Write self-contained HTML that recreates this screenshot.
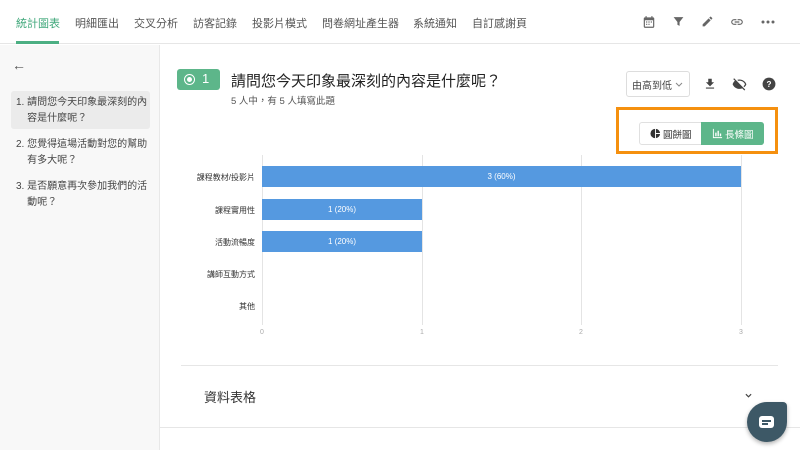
<!DOCTYPE html>
<html><head><meta charset="utf-8"><style>
*{margin:0;padding:0;box-sizing:border-box}
body{width:800px;height:450px;overflow:hidden;background:#fff;font-family:"Liberation Sans","Noto Sans CJK TC",sans-serif;color:#333;position:relative;white-space:nowrap}
.abs{position:absolute}
.nav{left:0;top:0;width:800px;height:44px;border-bottom:1px solid #e6e6e6;background:#fff}
.nav span{position:absolute;top:15px;font-size:11px;color:#555}
.side{left:0;top:45px;width:160px;height:405px;background:#f8f8f8;border-right:1px solid #e8e8e8}
.q{position:absolute;left:11px;width:139px;font-size:10px;line-height:16px;color:#444;padding:4px 5px}
.lab{position:absolute;right:545px;font-size:8px;color:#333;text-align:right}
.bar{position:absolute;left:262px;height:21px;background:#5599e0;color:#fff;font-size:8px;text-align:center;line-height:21px}
.grid{position:absolute;top:155px;width:1px;height:170px;background:#e4e4e4}
.tick{position:absolute;top:329px;font-size:7px;color:#aaa}
</style></head><body>
<div class="abs nav">
<span style="left:16px;color:#3fa77a">統計圖表</span>
<div class="abs" style="left:16px;top:41px;width:43px;height:3px;background:#4caf83"></div>
<span style="left:75px">明細匯出</span>
<span style="left:134px">交叉分析</span>
<span style="left:193px">訪客記錄</span>
<span style="left:252px">投影片模式</span>
<span style="left:322px">問卷網址產生器</span>
<span style="left:413px">系統通知</span>
<span style="left:472px">自訂感謝頁</span>
<svg class="abs" style="left:642px;top:15px" width="14" height="14" viewBox="0 0 24 24"><path fill="#666" d="M19 4h-1V2h-2v2H8V2H6v2H5a2 2 0 0 0-2 2v14a2 2 0 0 0 2 2h14a2 2 0 0 0 2-2V6a2 2 0 0 0-2-2zm0 16H5V9h14z"/><path fill="#666" d="M7 11h2v2H7zm4 0h2v2h-2zm4 0h2v2h-2zm-8 4h2v2H7zm4 0h2v2h-2z"/></svg>
<svg class="abs" style="left:672px;top:15px" width="13" height="13" viewBox="0 0 24 24"><path fill="#666" d="M3 4h18l-7 9v7l-4-2v-5z"/></svg>
<svg class="abs" style="left:701px;top:15px" width="13" height="13" viewBox="0 0 24 24"><path fill="#666" d="M3 17.2V21h3.8L17.8 9.9l-3.7-3.7zM20.7 7c.4-.4.4-1 0-1.4l-2.3-2.3c-.4-.4-1-.4-1.4 0l-1.8 1.8 3.7 3.7z"/></svg>
<svg class="abs" style="left:730px;top:15px" width="14" height="14" viewBox="0 0 24 24"><path fill="#666" d="M3.9 12c0-1.7 1.4-3.1 3.1-3.1h4V7H7a5 5 0 0 0 0 10h4v-1.9H7c-1.7 0-3.1-1.4-3.1-3.1zM8 13h8v-2H8zm9-6h-4v1.9h4c1.7 0 3.1 1.4 3.1 3.1s-1.4 3.1-3.1 3.1h-4V17h4a5 5 0 0 0 0-10z"/></svg>
<svg class="abs" style="left:761px;top:20px" width="14" height="4" viewBox="0 0 14 4"><circle cx="2" cy="2" r="1.5" fill="#666"/><circle cx="7" cy="2" r="1.5" fill="#666"/><circle cx="12" cy="2" r="1.5" fill="#666"/></svg>
</div>
<div class="abs side">
<div class="abs" style="left:12px;top:12px;font-size:14px;color:#555">←</div>
<div class="q" style="top:46px;background:#ebebeb;border-radius:3px;height:38px">1. 請問您今天印象最深刻的內<br>&nbsp;&nbsp;&nbsp;&nbsp;容是什麼呢？</div>
<div class="q" style="top:88px">2. 您覺得這場活動對您的幫助<br>&nbsp;&nbsp;&nbsp;&nbsp;有多大呢？</div>
<div class="q" style="top:130px">3. 是否願意再次參加我們的活<br>&nbsp;&nbsp;&nbsp;&nbsp;動呢？</div>
</div>
<div class="abs" style="left:177px;top:69px;width:43px;height:21px;background:#5db68a;border-radius:3px;color:#fff;font-size:13px">
<div class="abs" style="left:7px;top:5px;width:11px;height:11px;border:1.5px solid #fff;border-radius:50%"></div>
<div class="abs" style="left:10px;top:8px;width:5px;height:5px;background:#fff;border-radius:50%"></div>
<span class="abs" style="left:25px;top:2px">1</span></div>
<div class="abs" style="left:231px;top:70px;font-size:15px;color:#222">請問您今天印象最深刻的內容是什麼呢？</div>
<div class="abs" style="left:231px;top:93px;font-size:9.5px;color:#555">5 人中，有 5 人填寫此題</div>
<div class="abs" style="left:626px;top:71px;width:64px;height:26px;border:1px solid #ddd;border-radius:3px;font-size:10px;color:#444;padding:0 5px;display:flex;align-items:center">由高到低&nbsp;<svg width="8" height="5" viewBox="0 0 8 5"><path d="M1 1l3 3 3-3" fill="none" stroke="#888"/></svg></div>
<svg class="abs" style="left:703px;top:77px" width="14" height="14" viewBox="0 0 24 24"><path fill="#444" d="M19 9h-4V3H9v6H5l7 7zM5 18v2h14v-2z"/></svg>
<svg class="abs" style="left:732px;top:77px" width="15" height="15" viewBox="0 0 24 24"><path fill="#444" d="M12 6c3.8 0 7.2 2.1 8.8 5.5-.6 1.2-1.4 2.300-2.4 3.2l1.4 1.4c1.4-1.2 2.5-2.8 3.2-4.6C21.3 7.1 17 4 12 4c-1.3 0-2.5.2-3.6.6L10 6.2c.6-.1 1.3-.2 2-.2zM2 3.3l2.7 2.7C3 7.3 1.8 9.2 1 11.5 2.7 15.900 7 19 12 19c1.5 0 3-.3 4.4-.8l3.4 3.4 1.4-1.4L3.4 1.9z"/></svg>
<svg class="abs" style="left:762px;top:77px" width="14" height="14" viewBox="0 0 24 24"><circle cx="12" cy="12" r="11" fill="#444"/><text x="12" y="17" font-size="14" font-weight="bold" fill="#fff" text-anchor="middle" font-family="Liberation Sans">?</text></svg>
<div class="abs" style="left:616px;top:107px;width:162px;height:47px;border:3px solid #f5900f"></div>
<div class="abs" style="left:639px;top:122px;width:125px;height:23px;border:1px solid #e0e0e0;border-radius:3px;background:#fff"></div>
<div class="abs" style="left:701px;top:122px;width:63px;height:23px;background:#5db68a;border-radius:0 3px 3px 0"></div>
<svg class="abs" style="left:650px;top:128px" width="11" height="11" viewBox="0 0 24 24"><path fill="#333" d="M11 2v20a10 10 0 0 1 0-20zm2 0v9h9a10 10 0 0 0-9-9zm0 11v9a10 10 0 0 0 9-9z"/></svg>
<span class="abs" style="left:663px;top:127px;font-size:9.5px;color:#333">圓餅圖</span>
<svg class="abs" style="left:712px;top:128px" width="11" height="11" viewBox="0 0 24 24"><path fill="#fff" d="M2 2h2v18h18v2H2zm5 8h3v8H7zm5-4h3v12h-3zm5 6h3v6h-3z"/></svg>
<span class="abs" style="left:725px;top:127px;font-size:9.5px;color:#fff">長條圖</span>
<div class="grid" style="left:262px"></div><div class="grid" style="left:422px"></div><div class="grid" style="left:581px"></div><div class="grid" style="left:741px"></div>
<div class="bar" style="top:166px;width:479px">3 (60%)</div>
<div class="bar" style="top:199px;width:160px">1 (20%)</div>
<div class="bar" style="top:231px;width:160px">1 (20%)</div>
<div class="lab" style="top:172px">課程教材/投影片</div>
<div class="lab" style="top:205px">課程實用性</div>
<div class="lab" style="top:237px">活動流暢度</div>
<div class="lab" style="top:269px">講師互動方式</div>
<div class="lab" style="top:301px">其他</div>
<span class="tick" style="left:260px">0</span><span class="tick" style="left:420px">1</span><span class="tick" style="left:579px">2</span><span class="tick" style="left:739px">3</span>
<div class="abs" style="left:181px;top:365px;width:597px;height:1px;background:#e6e6e6"></div>
<div class="abs" style="left:204px;top:387px;font-size:13px;color:#333">資料表格</div>
<svg class="abs" style="left:745px;top:393px" width="7" height="5" viewBox="0 0 8 5"><path d="M1 1l3 3 3-3" fill="none" stroke="#444" stroke-width="1.3"/></svg>
<div class="abs" style="left:160px;top:427px;width:640px;height:1px;background:#e6e6e6"></div>
<div class="abs" style="left:747px;top:402px;width:40px;height:40px;background:#3d5866;border-radius:50% 4px 50% 50%;box-shadow:0 2px 4px rgba(0,0,0,.3)"></div>
<div class="abs" style="left:759px;top:416px;width:15px;height:12px;background:#fff;border-radius:3px"></div>
<div class="abs" style="left:762px;top:420px;width:9px;height:1.5px;background:#3d5866"></div>
<div class="abs" style="left:762px;top:423px;width:6px;height:1.5px;background:#3d5866"></div>
</body></html>
